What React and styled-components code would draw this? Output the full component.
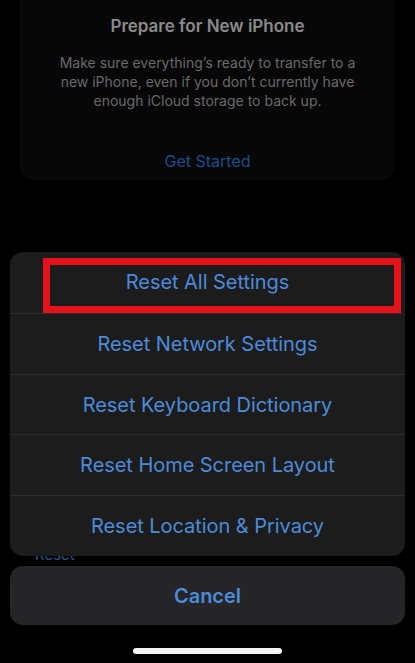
import React from "react";
import styled, { createGlobalStyle } from "styled-components";

const Global = createGlobalStyle`
  html, body { margin: 0; padding: 0; background: #000; }
  body { font-family: "Inter", "Liberation Sans", sans-serif; -webkit-font-smoothing: antialiased; }
`;

const Screen = styled.div`
  position: relative;
  width: 415px;
  height: 663px;
  background: #000;
  overflow: hidden;
`;

const Page = styled.div`
  display: flex;
  flex-direction: column;
  padding: 0 20px;
`;

const Card = styled.div`
  background: #070707;
  border-radius: 0 0 14px 14px;
  padding: 14px 10px 0;
  height: 166px;
  display: flex;
  flex-direction: column;
  align-items: center;
  text-align: center;
`;

const CardTitle = styled.div`
  color: #8a8a8a;
  font-size: 17px;
  font-weight: 600;
  line-height: 24px;
`;

const CardBody = styled.div`
  margin-top: 15px;
  color: #6a6a6a;
  font-size: 14px;
  line-height: 19px;
  width: 320px;
`;

const CardLink = styled.div`
  margin-top: 40px;
  color: #1d4c88;
  font-size: 16px;
  line-height: 22px;
`;

const UnderLabel = styled.div`
  margin-top: 365px;
  padding-left: 15px;
  color: #2a5590;
  font-size: 15px;
  line-height: 20px;
`;

const Overlay = styled.div`
  position: absolute;
  inset: 0;
  display: flex;
  flex-direction: column;
  justify-content: flex-end;
  align-items: center;
  padding: 0 10px 9px;
`;

const Sheet = styled.div`
  position: relative;
  width: 100%;
  background: #1c1c1d;
  border-radius: 13px;
  display: flex;
  flex-direction: column;
  overflow: hidden;
`;

const Action = styled.div`
  height: 60.8px;
  display: flex;
  align-items: center;
  justify-content: center;
  color: #4c8bd9;
  font-size: 20px;
  letter-spacing: -0.05px;
  border-top: ${(p) => (p.$first ? "none" : "1px solid #2c2c2e")};
  box-sizing: border-box;
`;

const Highlight = styled.div`
  position: absolute;
  left: 33px;
  top: 6px;
  width: 358px;
  height: 55px;
  border: 7px solid #e5121c;
  box-sizing: border-box;
  pointer-events: none;
`;

const CancelButton = styled.div`
  margin-top: 10px;
  width: 100%;
  height: 59px;
  background: #252527;
  border-radius: 13px;
  display: flex;
  align-items: center;
  justify-content: center;
  color: #4c8bd9;
  font-size: 20px;
  font-weight: 600;
`;

const HomeIndicator = styled.div`
  margin-top: 23px;
  width: 149px;
  height: 6px;
  border-radius: 3px;
  background: #f4f4f4;
`;

const actions = [
  "Reset All Settings",
  "Reset Network Settings",
  "Reset Keyboard Dictionary",
  "Reset Home Screen Layout",
  "Reset Location & Privacy",
];

export default function App() {
  return (
    <Screen>
      <Global />
      <Page>
        <Card>
          <CardTitle>Prepare for New iPhone</CardTitle>
          <CardBody>
            Make sure everything’s ready to transfer to a new iPhone, even if you don’t currently have enough iCloud storage to back up.
          </CardBody>
          <CardLink>Get Started</CardLink>
        </Card>
        <UnderLabel>Reset</UnderLabel>
      </Page>
      <Overlay>
        <Sheet>
          {actions.map((a, i) => (
            <Action key={a} $first={i === 0}>
              {a}
            </Action>
          ))}
          <Highlight />
        </Sheet>
        <CancelButton>Cancel</CancelButton>
        <HomeIndicator />
      </Overlay>
    </Screen>
  );
}
